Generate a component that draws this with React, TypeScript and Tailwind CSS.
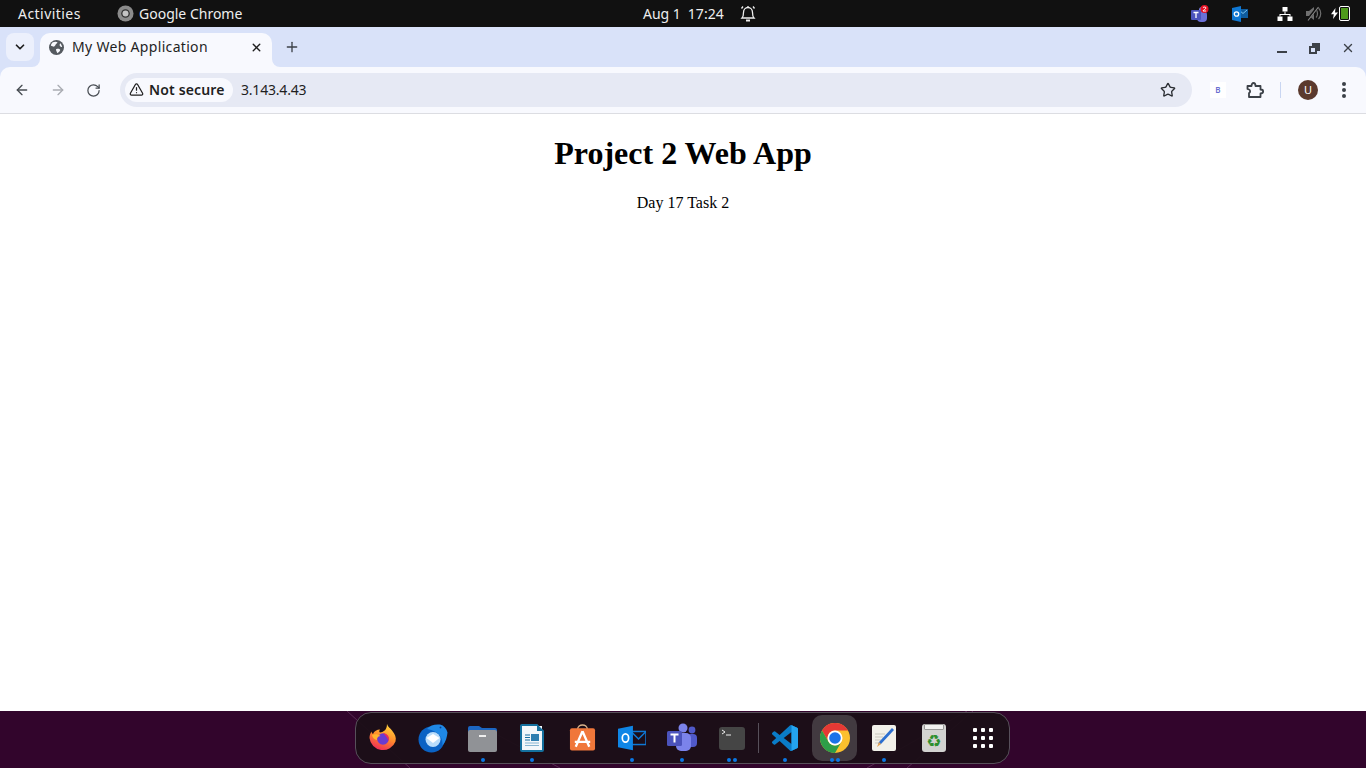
import { ArrowLeft, ArrowRight, ChevronDown, Plus, RotateCw, Star, X, TriangleAlert } from 'lucide-react';

const ui = "font-['Noto_Sans','Open_Sans',sans-serif]";

function DockItem({ dots = 0, active = false, children }: { dots?: number; active?: boolean; children: React.ReactNode }) {
    return (
        <div className={`relative w-[46px] h-[46px] mx-[2px] flex items-center justify-center rounded-[10px] ${active ? 'bg-[#423a40]' : ''}`}>
            {children}
            {dots > 0 && (
                <div className="absolute bottom-[-1px] left-0 right-0 flex justify-center gap-[2px]">
                    {Array.from({ length: dots }).map((_, i) => (
                        <span key={i} className="w-1 h-1 rounded-full bg-[#0a78e6]" />
                    ))}
                </div>
            )}
        </div>
    );
}

function TopBar() {
    return (
        <div className={`${ui} h-[27px] shrink-0 bg-[#111111] text-[#eeeeee] text-[14px] flex items-center relative`}>
            <span className="ml-[18px] w-[99px] tracking-[0.45px]">Activities</span>
            <svg width="17" height="17" viewBox="0 0 18 18">
                <circle cx="9" cy="9" r="8.500" fill="#8b8b8b" />
                <circle cx="9" cy="9" r="4.600" fill="#333" />
                <circle cx="9" cy="9" r="3.200" fill="#c4c4c4" />
            </svg>
            <span className="ml-[5px]">Google Chrome</span>
            <div className="absolute left-[643px] top-0 h-full flex items-center">
                <span>Aug 1</span>
                <span className="ml-[7px]">17:24</span>
                <svg className="ml-[16px]" width="16" height="18" viewBox="0 0 16 18" fill="none" stroke="#eeeeee" strokeWidth="1.300">
                    <path d="M2 13c1.500-1.500 1.500-3 1.500-5.500C3.500 4.500 5.500 2.500 8 2.500s4.500 2 4.500 5c0 2.500 0 4 1.500 5.500z" />
                    <path d="M8 1v1.500M3 1.500L1.500 3.500M13 1.500l1.500 2" />
                    <path d="M6 15.500h4" strokeWidth="2" />
                </svg>
            </div>
            <div className="ml-auto flex items-center">
                <svg width="18" height="18" viewBox="0 0 18 18">
                    <circle cx="11" cy="5" r="3" fill="#7b83eb" />
                    <rect x="6" y="6" width="10" height="11" rx="4" fill="#6a70d8" />
                    <rect x="0" y="5" width="10" height="10" rx="1" fill="#4b53bc" />
                    <path d="M2.500 7.500h5M5 7.500v5.500" stroke="#fff" strokeWidth="1.300" />
                    <circle cx="13.500" cy="4" r="4" fill="#e81123" />
                    <path d="M12 2.800c.5-1 3-1 3 .2 0 1-2.700 1.800-3 3h3.200" stroke="#fff" strokeWidth="1" fill="none" />
                </svg>
                <svg className="ml-[23px]" width="16" height="16" viewBox="0 0 16 16">
                    <rect x="6" y="3" width="10" height="9" fill="#0f5c9e" />
                    <path d="M7 4l4 3.500L15 4" stroke="#7cc4f0" strokeWidth="1" fill="none" />
                    <path d="M0 2l9-2v16l-9-2z" fill="#0f78d4" />
                    <circle cx="4.500" cy="8" r="2.200" fill="none" stroke="#fff" strokeWidth="1.300" />
                </svg>
                <svg className="ml-[29px]" width="16" height="14" viewBox="0 0 16 14" fill="#ffffff">
                    <rect x="5.500" y="0" width="5" height="4.500" />
                    <rect x="0.500" y="9.500" width="5" height="4.500" />
                    <rect x="10.500" y="9.500" width="5" height="4.500" />
                    <path d="M7.500 4.500h1V7H13.500v2.500h-1V8H3.500v1.500h-1V7h5z" />
                </svg>
                <svg className="ml-[13px]" width="16" height="15" viewBox="0 0 16 15" fill="#6f6f6f">
                    <path d="M0 5h3l5-4v13l-5-4H0z" />
                    <path d="M10 3.500c2 2 2 6 0 8M12.500 2c3 3 3 8 0 11" stroke="#6f6f6f" strokeWidth="1.200" fill="none" />
                    <path d="M1.500 14L12 0.500" stroke="#111111" strokeWidth="2.500" />
                    <path d="M2 14.500L12.500 1" stroke="#8a8a8a" strokeWidth="1.100" />
                </svg>
                <svg className="ml-[9px]" width="7" height="11" viewBox="0 0 7 11" fill="#ffffff">
                    <path d="M4.500 0L0 6.300h2.800L2 11l5-6.500H4z" />
                </svg>
                <div className="ml-[1px] mr-[16px] w-[11px] h-[15px] border border-white rounded-[2px] p-[1px] flex">
                    <div className="flex-1 bg-[#4f9a1c]" />
                </div>
            </div>
        </div>
    );
}

function TabStrip() {
    return (
        <div className={`${ui} h-[40px] shrink-0 bg-[#d9e2f9] flex items-end relative`}>
            <div className="absolute left-[6px] top-[6px] w-[28px] h-[28px] rounded-lg bg-[#ecf0fc] flex items-center justify-center">
                <ChevronDown className="w-[14px] h-[14px] text-[#1f1f1f]" strokeWidth={3} />
            </div>
            <div className="relative ml-[40px] w-[232px] h-[34px] bg-[#f8f9fe] rounded-t-[10px] flex items-center pl-[9px] pr-[9px] pb-[6px]">
                <div className="absolute left-[-8px] bottom-0 w-2 h-2 bg-[#f8f9fe]">
                    <div className="w-2 h-2 bg-[#d9e2f9] rounded-br-[8px]" />
                </div>
                <div className="absolute right-[-8px] bottom-0 w-2 h-2 bg-[#f8f9fe]">
                    <div className="w-2 h-2 bg-[#d9e2f9] rounded-bl-[8px]" />
                </div>
                <svg width="15" height="15" viewBox="0 0 16 16">
                    <circle cx="8" cy="8" r="8" fill="#555a60" />
                    <path d="M4 2.500c2-1 4-1 5 0 0 1.500-1.500 1.500-2 2.500S5.500 7.500 4.500 7 2 6 2 6c.2-1.500 1-2.700 2-3.500zM8 9.500c2-.5 3.500 0 4 1 0 1.500-2 3-3 3.500-.5-1-1-1.500-1.200-2.500-.5-1-.5-1.500.2-2zM12 3.500c1 1 1.800 2.500 2 4-1 0-2-.5-2.500-1.500-.3-1 0-2 .5-2.500z" fill="#f8f9fe" />
                </svg>
                <span className="ml-[8px] mb-[1px] text-[14px] text-[#1f1f1f] tracking-[0.32px]">My Web Application</span>
                <X className="ml-auto w-[13px] h-[13px] text-[#1f1f1f]" strokeWidth={2.6} />
            </div>
            <Plus className="ml-[12px] mb-[12px] w-4 h-4 text-[#3c4148]" strokeWidth={2} />
            <div className="ml-auto mb-[12px] mr-[11px] flex items-center text-[#3c4148]">
                <div className="w-[10px] h-[2px] bg-[#3c4148] mt-[8px]" />
                <div className="ml-[22px] w-[11px] h-[11px] relative">
                    <div className="absolute right-0 top-0 w-[8px] h-[8px] border-[2px] border-[#3c4148] bg-[#3c4148]" />
                    <div className="absolute left-0 bottom-0 w-[8px] h-[8px] border-[2px] border-[#3c4148] bg-[#d9e2f9]" />
                </div>
                <X className="ml-[21px] w-[14px] h-[14px]" strokeWidth={2.4} />
            </div>
        </div>
    );
}

function Toolbar() {
    return (
        <div className="bg-[#d9e2f9] shrink-0">
            <div className={`${ui} h-[47px] bg-[#f8f9fe] border-b border-[#dcdde2] flex items-center rounded-t-[10px]`}>
                <ArrowLeft className="ml-[14px] w-4 h-4 text-[#474c52]" strokeWidth={2} />
                <ArrowRight className="ml-[20px] w-4 h-4 text-[#a9acb2]" strokeWidth={2} />
                <RotateCw className="ml-[20px] w-[15px] h-[15px] text-[#474c52]" strokeWidth={2} />
                <div className="ml-[19px] w-[1072px] h-[34px] bg-[#e6e9f4] rounded-full flex items-center pl-[5px]">
                    <div className="h-[24px] w-[108px] bg-[#f8f9fe] rounded-full flex items-center pl-[4px] pb-[1px]">
                        <TriangleAlert className="w-[15px] h-[15px] text-[#1f1f1f]" strokeWidth={2} />
                        <span className="ml-[5px] text-[14px] font-semibold text-[#1f1f1f] tracking-[0.15px]">Not secure</span>
                    </div>
                    <span className="ml-[8px] pb-[1px] text-[14px] text-[#1f1f1f] tracking-[-0.2px]">3.143.4.43</span>
                    <Star className="ml-auto mr-[16px] w-4 h-4 text-[#2a2d32]" strokeWidth={2} />
                </div>
                <div className="ml-[18px] w-4 h-4 bg-white flex items-center justify-center text-[8px] font-semibold text-[#6a6fd0]">B</div>
                <svg className="ml-[20px]" width="18" height="18" viewBox="0 0 18 18" fill="none" stroke="#3c4148" strokeWidth="1.800" strokeLinejoin="round">
                    <path d="M1.500 5h4c0-4 4-4 4 0h5v3.500c3.500 0 3.500 4 0 4V16H3V12c1.500-.5 1.500-3 0-3.500L1.500 8z" />
                </svg>
                <div className="ml-[16px] w-px h-4 bg-[#c9d6f2]" />
                <div className="ml-[17px] w-5 h-5 rounded-full bg-[#5b3a2e] text-white text-[11px] flex items-center justify-center">U</div>
                <div className="ml-[24px] flex flex-col gap-[2.500px]">
                    <span className="w-[3.500px] h-[3.500px] rounded-full bg-[#3c4148]" />
                    <span className="w-[3.500px] h-[3.500px] rounded-full bg-[#3c4148]" />
                    <span className="w-[3.500px] h-[3.500px] rounded-full bg-[#3c4148]" />
                </div>
            </div>
        </div>
    );
}

function Dock() {
    return (
        <div className="h-[57px] shrink-0 bg-[#32052c] relative flex justify-center overflow-hidden">
            <svg className="absolute inset-0" width="1366" height="57" viewBox="0 0 1366 57">
                <path d="M347 0L410 57M967 0L867 57M973 0L907 57M490 20L560 57" stroke="#5a2a55" strokeWidth="1" fill="none" />
            </svg>
            <div className="relative ml-[-1px] mt-[1px] h-[52px] w-[655px] rounded-[16px] border border-[#57505a] bg-[#1b0f17]/95 flex items-center pl-[2px]">
                <DockItem>
                    <svg width="28" height="28" viewBox="0 0 28 28">
                        <defs>
                            <linearGradient id="fx" x1="0.700" y1="0" x2="0.300" y2="1">
                                <stop offset="0" stopColor="#ffd43b" />
                                <stop offset="0.500" stopColor="#ff8a2b" />
                                <stop offset="1" stopColor="#f0285a" />
                            </linearGradient>
                        </defs>
                        <path d="M18 0c1 3 3 4 5 6.500 3 3.500 4.500 7 3.500 11A13.500 13.500 0 0 1 .5 14c0-2.500.8-4.500 2-6.500 0 1 .5 1.800 1.500 2.500C5 7 8 5.500 11 5.500c-1 1.500-1 2.500 0 3 3-.5 7-2 7-8.500z" fill="url(#fx)" />
                        <circle cx="14" cy="15" r="5.800" fill="#6a3bd1" />
                        <path d="M3 11c3-1.500 6-1 8.500 1-3 .5-4 2-3.500 4C5.500 15.500 3.500 14 3 11z" fill="#ffb52e" />
                        <path d="M14 9.200c3.500 0 5.800 2.500 5.800 5.800 0 .8-.1 1.400-.4 2-1-3.500-3-6-5.400-7.800z" fill="#f0285a" />
                    </svg>
                </DockItem>
                <DockItem>
                    <svg width="30" height="29" viewBox="0 0 30 29">
                        <circle cx="13.500" cy="15.500" r="13" fill="#0a62c4" />
                        <path d="M9 5C12 1 17 0 22 .5c4 1 6.500 4 7.500 8-.5 4.500-1.500 9-5 13 .5-8-3-14-15.500-16.500z" fill="#1f88e5" />
                        <path d="M22 2.500l1.500.5-.5 1.500-1.500-.5z" fill="#0a3f8c" />
                        <circle cx="15" cy="15.500" r="7.500" fill="#b9ddfb" />
                        <path d="M8.500 14l6.500 5 6.500-5-6.500-4z" fill="#ffffff" />
                    </svg>
                </DockItem>
                <DockItem dots={1}>
                    <svg width="29" height="27" viewBox="0 0 29 27">
                        <path d="M0 3a2 2 0 0 1 2-2h9l3 2h13a2 2 0 0 1 2 2v4H0z" fill="#1c66c2" />
                        <rect x="0" y="5" width="29" height="22" rx="2" fill="#909296" />
                        <rect x="11" y="10" width="7" height="2" fill="#eeeeee" />
                    </svg>
                </DockItem>
                <DockItem dots={1}>
                    <svg width="24" height="28" viewBox="0 0 24 28">
                        <path d="M0 2a2 2 0 0 1 2-2h15l7 7v19a2 2 0 0 1-2 2H2a2 2 0 0 1-2-2z" fill="#14709e" />
                        <rect x="2" y="2" width="20" height="24" fill="#f3f7fa" />
                        <path d="M17 0l7 7h-7z" fill="#14709e" />
                        <path d="M5 11h5M5 13.500h5M5 16h5" stroke="#1a6fa0" strokeWidth="1.200" />
                        <rect x="11" y="10" width="8" height="7" fill="#2d7eb0" />
                        <path d="M5 19h14M5 21.500h14" stroke="#86b5d1" strokeWidth="1.200" />
                    </svg>
                </DockItem>
                <DockItem>
                    <svg width="27" height="28" viewBox="0 0 28 28">
                        <path d="M9 5c0-6 10-6 10 0" stroke="#d9b38c" strokeWidth="1.400" fill="none" />
                        <rect x="1" y="4" width="26" height="23" rx="2" fill="#f0773a" />
                        <path d="M14 7L7 23M14 7l7 16M6 18h16" stroke="#fff" strokeWidth="2.400" fill="none" />
                    </svg>
                </DockItem>
                <DockItem dots={1}>
                    <svg width="28" height="26" viewBox="0 0 30 26">
                        <rect x="14" y="6" width="16" height="14" fill="none" stroke="#0f78d4" strokeWidth="1.600" />
                        <path d="M14 6l8 8 8-8" stroke="#0f78d4" strokeWidth="1.600" fill="none" />
                        <path d="M0 3l16-3v26l-16-3z" fill="#0f86e6" />
                        <ellipse cx="8" cy="13" rx="3.400" ry="4.400" fill="none" stroke="#fff" strokeWidth="1.800" />
                    </svg>
                </DockItem>
                <DockItem dots={1}>
                    <svg width="30" height="30" viewBox="0 0 30 30">
                        <circle cx="16" cy="5" r="4.500" fill="#7b83eb" />
                        <circle cx="25" cy="7" r="3.400" fill="#5059c9" />
                        <rect x="20" y="11" width="10" height="13" rx="4" fill="#5059c9" />
                        <rect x="9" y="10" width="15" height="18" rx="5" fill="#7b83eb" />
                        <rect x="0" y="8" width="15" height="15" rx="1.500" fill="#4b53bc" />
                        <path d="M3.500 11.500h8M7.500 11.500v8" stroke="#fff" strokeWidth="2" />
                    </svg>
                </DockItem>
                <DockItem dots={2}>
                    <svg width="26" height="23" viewBox="0 0 26 23">
                        <rect width="26" height="23" rx="3" fill="#454545" />
                        <path d="M3 3l3 2-3 2M7 8h5" stroke="#eee" strokeWidth="1" fill="none" />
                    </svg>
                </DockItem>
                <div className="w-px h-[30px] bg-[#57505a] mx-[1px]" />
                <DockItem dots={1}>
                    <svg width="26" height="26" viewBox="0 0 24 24">
                        <path d="M23.150 2.587L18.210.21a1.494 1.494 0 0 0-1.705.29l-9.460 8.630-4.120-3.128a.999.999 0 0 0-1.276.057L.327 7.261A1 1 0 0 0 .326 8.740L3.899 12 .326 15.260a1 1 0 0 0 .001 1.479L1.650 17.940a.999.999 0 0 0 1.276.057l4.120-3.128 9.460 8.630a1.492 1.492 0 0 0 1.704.290l4.942-2.377A1.500 1.500 0 0 0 24 20.060V3.939a1.500 1.500 0 0 0-.850-1.352zm-5.146 14.861L10.826 12l7.178-5.448v10.896z" fill="#0a7cc8" />
                        <path d="M18.004 0.060l0.206 0.150 4.940 2.377A1.500 1.500 0 0 1 24 3.939V20.060a1.500 1.500 0 0 1-.850 1.353l-4.940 2.377-.206.150z" fill="#24a4f0" />
                    </svg>
                </DockItem>
                <DockItem dots={2} active>
                    <svg width="30" height="30" viewBox="0 0 30 30">
                        <circle cx="15" cy="15" r="15" fill="#fbc02d" />
                        <path d="M15 7.500H28A15 15 0 0 0 2 7.500L8.500 18.750A7.500 7.500 0 0 1 15 7.500z" fill="#e53935" />
                        <path d="M2 7.500A15 15 0 0 0 15 30L21.500 18.750A7.500 7.500 0 0 1 8.500 18.750z" fill="#2e9e48" />
                        <circle cx="15" cy="15" r="7.500" fill="#fff" />
                        <circle cx="15" cy="15" r="5.800" fill="#1a73e8" />
                    </svg>
                </DockItem>
                <DockItem dots={1}>
                    <svg width="24" height="28" viewBox="0 0 24 26">
                        <rect width="24" height="26" rx="2" fill="#f2f1ea" />
                        <path d="M3 9h10M3 12h8M3 15h6M3 18h5" stroke="#c9c7bd" strokeWidth="1" />
                        <path d="M20 3l2 2L9 19l-3 1 1-3z" fill="#2c6fd0" />
                        <path d="M7 17l2 2-4 3z" fill="#e9a451" />
                    </svg>
                </DockItem>
                <DockItem>
                    <div className="relative w-[24px] h-[28px] rounded-[3px] bg-[#d2d2d0] flex items-end justify-center overflow-hidden">
                        <div className="absolute top-0 left-[2px] right-[2px] h-[6px] rounded-[1px] bg-[#f2f2f0] border border-[#9a9a98]" />
                        <span className="text-[17px] leading-[22px] text-[#2e8f2e] font-['DejaVu_Sans',sans-serif]">♻</span>
                    </div>
                </DockItem>
                <DockItem>
                    <div className="grid grid-cols-3 gap-[4px] mr-[2px]">
                        {Array.from({ length: 9 }).map((_, i) => (
                            <span key={i} className="w-1 h-1 bg-white rounded-[1px]" />
                        ))}
                    </div>
                </DockItem>
            </div>
        </div>
    );
}

export default function App() {
    return (
        <div className="h-screen overflow-hidden flex flex-col bg-white">
            <TopBar />
            <TabStrip />
            <Toolbar />
            <main className="flex-1 text-center text-black font-['Liberation_Serif',serif]">
                <h1 className="mt-[21px] text-[32px] leading-[37px] font-bold">Project 2 Web App</h1>
                <p className="mt-[22px] text-[16px] leading-[18px]">Day 17 Task 2</p>
            </main>
            <Dock />
        </div>
    );
}
